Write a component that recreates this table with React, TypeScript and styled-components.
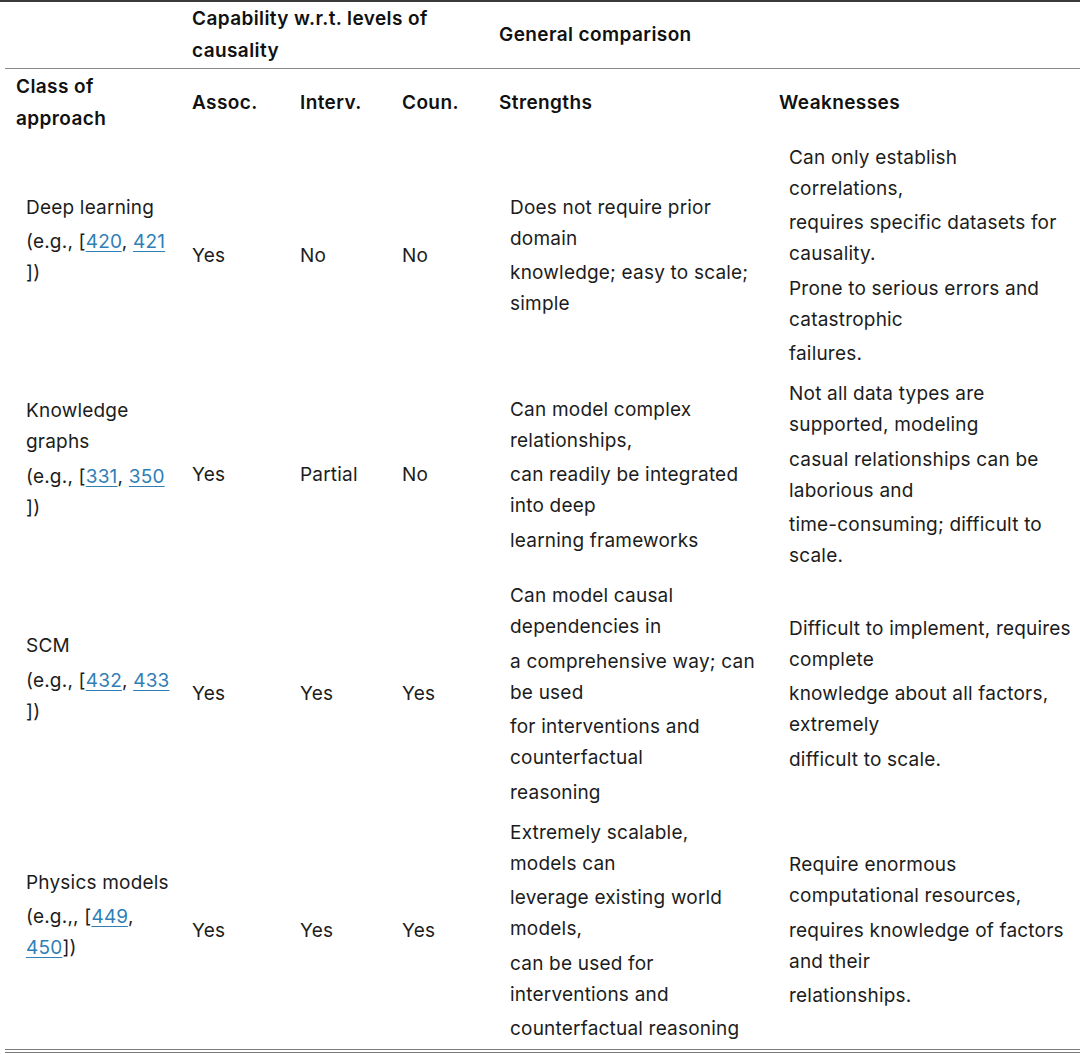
import React, { Fragment } from "react";
import styled, { createGlobalStyle } from "styled-components";

const GlobalStyle = createGlobalStyle`
  html, body {
    margin: 0;
    padding: 0;
    background: #ffffff;
  }
  body {
    font-family: Inter, "Noto Sans", "Liberation Sans", sans-serif;
    color: #1c1c1c;
  }
`;

type Para = React.ReactNode[];

type Row = {
  name: Para[];
  assoc: string;
  interv: string;
  coun: string;
  strengths: Para[];
  weaknesses: Para[];
};

const Ref = styled.a`
  color: #2f7fb6;
  text-decoration: underline;
  text-underline-offset: 3px;
  text-decoration-thickness: 1px;
`;

const cite = (a: string, b: string) => (
  <Fragment>
    (e.g., [<Ref href="#">{a}</Ref>, <Ref href="#">{b}</Ref>
  </Fragment>
);

const rows: Row[] = [
  {
    name: [["Deep learning"], [cite("420", "421"), "])"]],
    assoc: "Yes",
    interv: "No",
    coun: "No",
    strengths: [
      ["Does not require prior", "domain"],
      ["knowledge; easy to scale;", "simple"],
    ],
    weaknesses: [
      ["Can only establish", "correlations,"],
      ["requires specific datasets for", "causality."],
      ["Prone to serious errors and", "catastrophic"],
      ["failures."],
    ],
  },
  {
    name: [["Knowledge", "graphs"], [cite("331", "350"), "])"]],
    assoc: "Yes",
    interv: "Partial",
    coun: "No",
    strengths: [
      ["Can model complex", "relationships,"],
      ["can readily be integrated", "into deep"],
      ["learning frameworks"],
    ],
    weaknesses: [
      ["Not all data types are", "supported, modeling"],
      ["casual relationships can be", "laborious and"],
      ["time-consuming; difficult to", "scale."],
    ],
  },
  {
    name: [["SCM"], [cite("432", "433"), "])"]],
    assoc: "Yes",
    interv: "Yes",
    coun: "Yes",
    strengths: [
      ["Can model causal", "dependencies in"],
      ["a comprehensive way; can", "be used"],
      ["for interventions and", "counterfactual"],
      ["reasoning"],
    ],
    weaknesses: [
      ["Difficult to implement, requires", "complete"],
      ["knowledge about all factors,", "extremely"],
      ["difficult to scale."],
    ],
  },
  {
    name: [
      ["Physics models"],
      [
        <Fragment>
          (e.g.,, [<Ref href="#">449</Ref>,
        </Fragment>,
        <Fragment>
          <Ref href="#">450</Ref>])
        </Fragment>,
      ],
    ],
    assoc: "Yes",
    interv: "Yes",
    coun: "Yes",
    strengths: [
      ["Extremely scalable,", "models can"],
      ["leverage existing world", "models,"],
      ["can be used for", "interventions and"],
      ["counterfactual reasoning"],
    ],
    weaknesses: [
      ["Require enormous", "computational resources,"],
      ["requires knowledge of factors", "and their"],
      ["relationships."],
    ],
  },
];

const Frame = styled.div`
  border-top: 2px solid #3a3a3a;
  width: 1080px;
`;

const Table = styled.table`
  border-collapse: collapse;
  table-layout: fixed;
  width: 1075px;
  margin-left: 5px;
  font-size: 19px;
  letter-spacing: 0.2px;
`;

const HeadCell = styled.th<{ $pl?: number; $py?: number; $rule?: boolean }>`
  text-align: left;
  vertical-align: middle;
  font-weight: 600;
  letter-spacing: 0.4px;
  color: #111111;
  line-height: 32px;
  white-space: nowrap;
  padding: ${(p) => p.$py ?? 1}px 0 ${(p) => p.$py ?? 1}px
    ${(p) => p.$pl ?? 10}px;
  border-bottom: ${(p) => (p.$rule ? "1px solid #8a8a8a" : "none")};
`;

const BodyCell = styled.td<{ $pl?: number; $last?: boolean }>`
  vertical-align: middle;
  line-height: 31px;
  padding: 4.5px 0 4.5px ${(p) => p.$pl ?? 10}px;
  white-space: nowrap;
  border-bottom: ${(p) => (p.$last ? "4px double #7a7a7a" : "none")};
`;

const Stack = styled.div<{ $tail?: boolean }>`
  display: flex;
  flex-direction: column;
  gap: 3.5px;
  padding-bottom: ${(p) => (p.$tail ? "31px" : "0")};
`;

const Paragraph = styled.div`
  display: flex;
  flex-direction: column;
`;

const Line = styled.span`
  display: block;
  height: 31px;
`;

const Paras = ({ items, tail }: { items: Para[]; tail?: boolean }) => (
  <Stack $tail={tail}>
    {items.map((p, i) => (
      <Paragraph key={i}>
        {p.map((l, j) => (
          <Line key={j}>{l}</Line>
        ))}
      </Paragraph>
    ))}
  </Stack>
);

const App = () => {
  return (
    <Fragment>
      <GlobalStyle />
      <Frame>
        <Table>
          <colgroup>
            <col style={{ width: 177 }} />
            <col style={{ width: 108 }} />
            <col style={{ width: 102 }} />
            <col style={{ width: 97 }} />
            <col style={{ width: 280 }} />
            <col style={{ width: 311 }} />
          </colgroup>
          <thead>
            <tr>
              <HeadCell $rule $pl={11} />
              <HeadCell $rule colSpan={3}>
                Capability w.r.t. levels of
                <br />
                causality
              </HeadCell>
              <HeadCell $rule colSpan={2}>
                General comparison
              </HeadCell>
            </tr>
            <tr>
              <HeadCell $pl={11} $py={2}>
                Class of
                <br />
                approach
              </HeadCell>
              <HeadCell $py={2}>Assoc.</HeadCell>
              <HeadCell $py={2}>Interv.</HeadCell>
              <HeadCell $py={2}>Coun.</HeadCell>
              <HeadCell $py={2}>Strengths</HeadCell>
              <HeadCell $py={2}>Weaknesses</HeadCell>
            </tr>
          </thead>
          <tbody>
            {rows.map((r, i) => {
              const last = i === rows.length - 1;
              return (
                <tr key={i}>
                  <BodyCell $pl={21} $last={last}>
                    <Paras items={r.name} tail />
                  </BodyCell>
                  <BodyCell $last={last}>{r.assoc}</BodyCell>
                  <BodyCell $last={last}>{r.interv}</BodyCell>
                  <BodyCell $last={last}>{r.coun}</BodyCell>
                  <BodyCell $pl={21} $last={last}>
                    <Paras items={r.strengths} />
                  </BodyCell>
                  <BodyCell $pl={20} $last={last}>
                    <Paras items={r.weaknesses} />
                  </BodyCell>
                </tr>
              );
            })}
          </tbody>
        </Table>
      </Frame>
    </Fragment>
  );
};

export default App;
